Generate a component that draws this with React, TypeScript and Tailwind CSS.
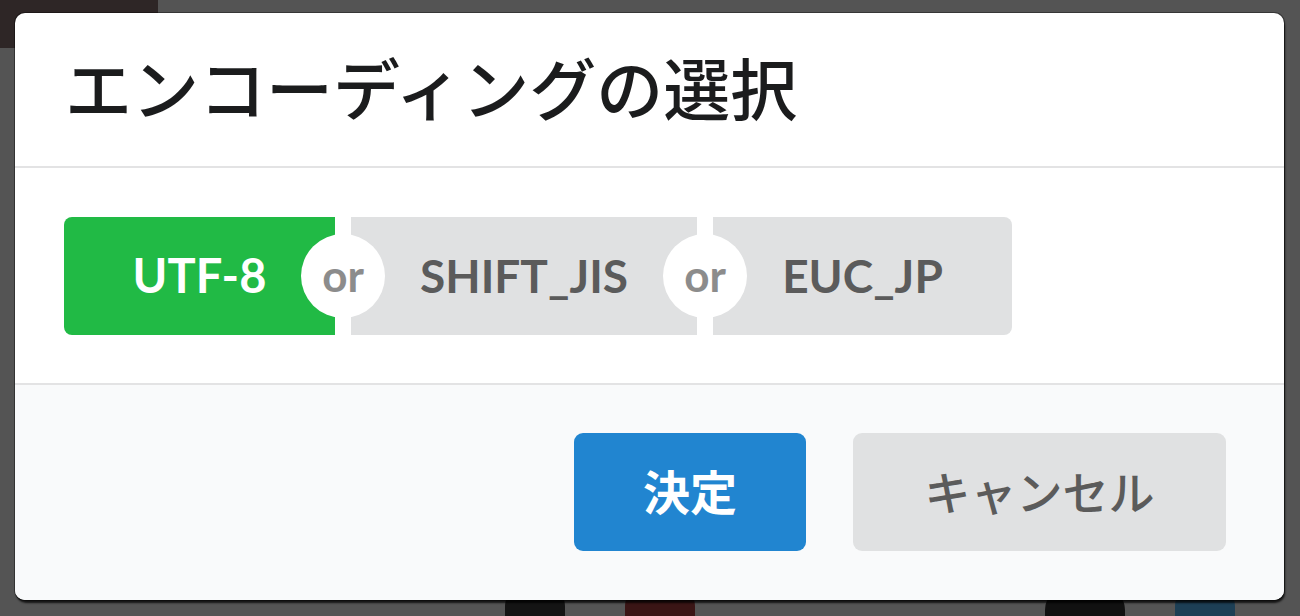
export default function App() {
  const font = "font-['Lato','Noto_Sans_CJK_JP',sans-serif]";

  return (
    <div className={`relative w-[1300px] h-[616px] overflow-hidden bg-[#545454] pt-[13px] pl-[15px] ${font}`}>
      {/* dimmed page behind the modal */}
      <div className="absolute left-0 top-0 w-[158px] h-[48px] bg-[#2e2626]" />
      <div className="absolute left-[505px] bottom-0 w-[60px] h-[30px] bg-[#141414] rounded-t-[20px]" />
      <div className="absolute left-[625px] bottom-0 w-[70px] h-[30px] bg-[#3a1515] rounded-t-[20px]" />
      <div className="absolute left-[1045px] bottom-0 w-[80px] h-[30px] bg-[#111] rounded-t-[24px]" />
      <div className="absolute left-[1175px] bottom-0 w-[60px] h-[30px] bg-[#1d3f55] rounded-t-[20px]" />

      <div className="relative w-[1269px] h-[587px] bg-white rounded-[10px] overflow-hidden flex flex-col shadow-[1px_3px_2px_0_rgba(0,0,0,0.75),0_0_0_1px_rgba(0,0,0,0.35)]">
        <div className="h-[155px] flex items-center pl-[50px] border-b-2 border-[#e3e3e4]">
          <h1 className="text-[67px] font-medium text-[#1b1c1d] leading-none">エンコーディングの選択</h1>
        </div>

        <div className="h-[215px] flex items-center pl-[49px]">
          <div className="flex h-[118px]">
            <button className="w-[271px] h-full bg-[#21ba45] text-white text-[47px] font-bold rounded-l-[8px] flex items-center justify-center">
              UTF-8
            </button>
            <Or />
            <button className="w-[346px] h-full bg-[#e0e1e2] text-[#5b5b5b] text-[46px] font-bold flex items-center justify-center">
              SHIFT_JIS
            </button>
            <Or />
            <button className="w-[299px] h-full bg-[#e0e1e2] text-[#5b5b5b] text-[46px] font-bold rounded-r-[8px] flex items-center justify-center">
              EUC_JP
            </button>
          </div>
        </div>

        <div className="flex-1 bg-[#f9fafb] border-t-2 border-[#e3e3e4] flex items-start justify-end gap-[47px] pt-[48px] pr-[58px]">
          <button className="w-[232px] h-[118px] rounded-[9px] bg-[#2185d0] text-white text-[47px] font-bold flex items-center justify-center">
            決定
          </button>
          <button className="w-[373px] h-[118px] rounded-[9px] bg-[#e0e1e2] text-[#5b5b5b] text-[46px] font-medium flex items-center justify-center">
            キャンセル
          </button>
        </div>
      </div>
    </div>
  );
}

function Or() {
  return (
    <div className="relative w-[16px] h-full">
      <div className="absolute left-1/2 top-1/2 -translate-x-1/2 -translate-y-1/2 w-[84px] h-[84px] rounded-full bg-white flex items-center justify-center">
        <span className="text-[44px] font-bold text-[#8c8c8c] leading-none pb-[2px]">or</span>
      </div>
    </div>
  );
}
